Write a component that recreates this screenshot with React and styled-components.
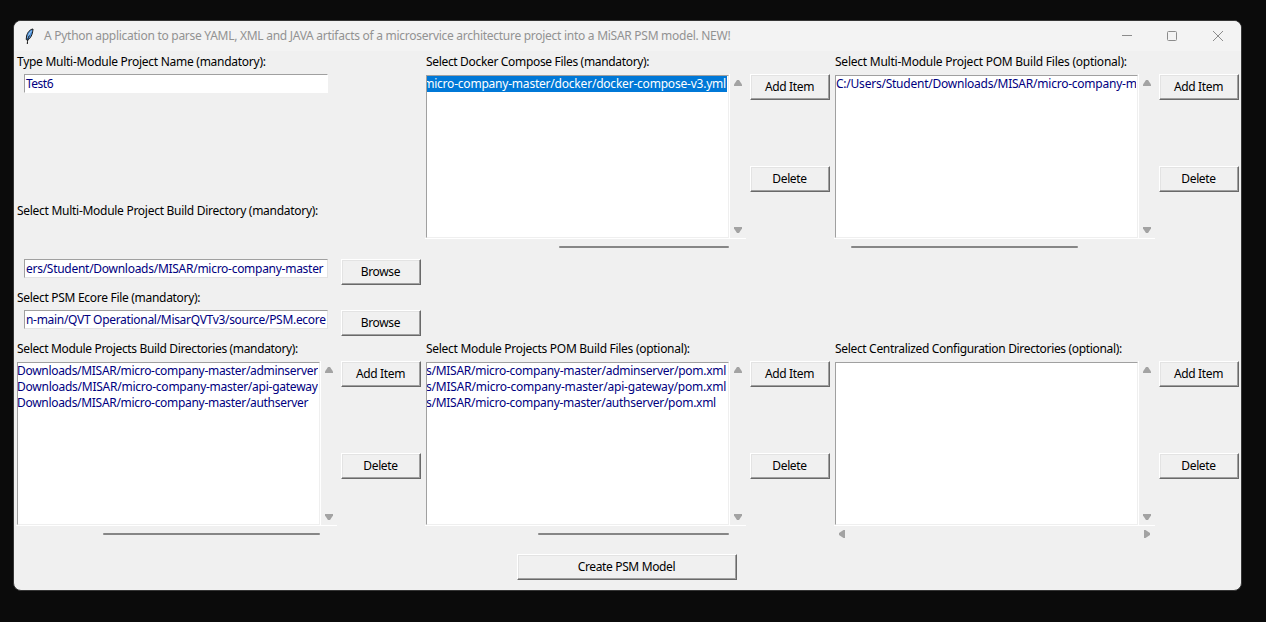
import React from "react";
import styled, { createGlobalStyle } from "styled-components";

const GlobalStyle = createGlobalStyle`
  * { box-sizing: border-box; }
  body {
    margin: 0;
    background: #0b0b0b;
    font-family: "Noto Sans", "Open Sans", sans-serif;
    font-size: 12px;
    color: #000;
    overflow: hidden;
  }
`;

const Desktop = styled.div`
  height: 622px;
  padding: 20px 24px 31px 13px;
`;

const Window = styled.main`
  width: 1229px;
  height: 571px;
  border: 1px solid #363636;
  border-radius: 8px;
  background: #f0f0f0;
  overflow: hidden;
`;

const TitleBar = styled.header`
  display: flex;
  align-items: center;
  height: 30px;
  padding-left: 9px;
  background: #f3f3f3;
  color: #929292;
`;

const Title = styled.h1`
  flex: 1;
  margin: 0 0 0 9px;
  font-size: 12px;
  font-weight: 400;
  line-height: 16px;
  white-space: nowrap;
  letter-spacing: ${(p) => p.$spacing}px;
`;

const Controls = styled.div`
  display: flex;
`;

const ControlButton = styled.button`
  display: flex;
  align-items: center;
  justify-content: center;
  width: 46px;
  height: 28px;
  padding: 0;
  border: 0;
  background: none;
  color: #8c8c8c;
`;

const Row = styled.div`
  display: grid;
  grid-template-columns: repeat(3, 409px);
  height: ${(p) => p.$height}px;
  padding-left: 2px;
`;

const Panel = styled.section`
  display: flex;
  flex-direction: column;
  min-width: 0;
`;

const Label = styled.label`
  height: 23px;
  margin-top: ${(p) => p.$top || 0}px;
  padding-left: 1px;
  line-height: 22px;
  white-space: nowrap;
  letter-spacing: ${(p) => p.$spacing || 0}px;
`;

const FieldRow = styled.div`
  display: flex;
  height: 26px;
  gap: 13px;
  margin-top: ${(p) => p.$top || 0}px;
  padding-left: 8px;
`;

const Entry = styled.div`
  width: 304px;
  height: 19px;
  padding: 0 0 0 1px;
  border: 1px solid;
  border-color: #a0a0a0 ${(p) => p.$edge} ${(p) => p.$edge} #a0a0a0;
  background: #fff;
  color: #000080;
  line-height: 17px;
  white-space: nowrap;
  overflow: hidden;
  letter-spacing: ${(p) => p.$spacing || 0}px;
`;

const PushButton = styled.button`
  width: ${(p) => p.$width || 80}px;
  height: 26px;
  padding: 0 1px 1px 0;
  border: 1px solid;
  border-color: #fff #696969 #696969 #fff;
  background: #f0f0f0;
  box-shadow: inset -1px -1px #a0a0a0, inset 1px 1px #e3e3e3;
  color: #000;
  font: inherit;
  line-height: 16px;
  letter-spacing: -0.36px;
`;

const PanelBody = styled.div`
  display: flex;
  gap: 4px;
`;

const ListArea = styled.div`
  width: 321px;
`;

const ListTop = styled.div`
  display: flex;
  height: 165px;
  border-bottom: 1px solid #fff;
`;

const ListFrame = styled.div`
  width: 305px;
  padding: 1px 0 0 1px;
  border-right: 1px solid #fff;
`;

const ListBox = styled.ul`
  height: 163px;
  margin: 0;
  padding: 0 1px 0 0;
  border: 1px solid;
  border-color: #a0a0a0 #efefef #efefef #a0a0a0;
  background: #fff;
  list-style: none;
  overflow: hidden;
`;

const Item = styled.li`
  display: flex;
  justify-content: ${(p) => (p.$end ? "flex-end" : "flex-start")};
  height: 16px;
  padding-right: ${(p) => (p.$end ? 1 : 0)}px;
  background: ${(p) => (p.$selected ? "#0078d7" : "transparent")};
  color: ${(p) => (p.$selected ? "#fff" : "#000080")};
  line-height: 16px;
  white-space: nowrap;
  overflow: hidden;
  text-indent: ${(p) => p.$indent || 0}px;
  letter-spacing: ${(p) => p.$spacing || 0}px;
`;

const VScroll = styled.div`
  display: flex;
  flex-direction: column;
  justify-content: space-between;
  align-items: center;
  width: 16px;
  padding: 6px 0 5px;
`;

const HScroll = styled.div`
  display: flex;
  align-items: center;
  justify-content: space-between;
  height: 16px;
  padding: 0 5px;
`;

const Thumb = styled.div`
  width: ${(p) => p.$width}px;
  height: 2px;
  margin-left: ${(p) => p.$start - 5}px;
  border-radius: 1px;
  background: #868686;
`;

const Buttons = styled.div`
  display: flex;
  flex-direction: column;
  gap: 66px;
`;

const Footer = styled.footer`
  display: flex;
  padding: 11px 0 0 503px;
`;

const ARROWS = {
  up: { w: 8, h: 6, d: "M3 0H5L8 4.5V6H0V4.5Z" },
  down: { w: 8, h: 6, d: "M0 0H8V1.5L5 6H3L0 1.5Z" },
  left: { w: 6, h: 8, d: "M6 0V8H4.5L0 5V3L4.5 0Z" },
  right: { w: 6, h: 8, d: "M0 0V8H1.5L6 5V3L1.5 0Z" },
};

function Arrow({ dir }) {
  const { w, h, d } = ARROWS[dir];
  return (
    <svg width={w} height={h} viewBox={`0 0 ${w} ${h}`}>
      <path d={d} fill="#a3a3a3" />
    </svg>
  );
}

function Feather() {
  return (
    <svg width="12" height="17" viewBox="0 0 12 17">
      <path d="M10 1C7 1.300 4.300 4.500 3.600 8L3.200 11.500L4.400 12.300C7.300 10.800 9.600 7 10 1Z" fill="#4a90dc" stroke="#1c1c1c" strokeWidth="1" />
      <path d="M8.600 2.800C6.800 4.500 5.500 7.200 4.800 10" fill="none" stroke="#b5daf8" strokeWidth="0.900" />
      <path d="M6.300 7.500C5 10 4.500 12 4.300 16" fill="none" stroke="#111" strokeWidth="1" />
    </svg>
  );
}

function ListPanel({ label, spacing, items = [], end, indent, selected, thumb }) {
  return (
    <Panel>
      <Label $spacing={spacing}>{label}</Label>
      <PanelBody>
        <ListArea>
          <ListTop>
            <ListFrame>
              <ListBox>
                {items.map((item, i) => (
                  <Item key={item.path} $end={end} $indent={indent} $spacing={item.spacing} $selected={i === selected}>
                    {item.path}
                  </Item>
                ))}
              </ListBox>
            </ListFrame>
            <VScroll>
              <Arrow dir="up" />
              <Arrow dir="down" />
            </VScroll>
          </ListTop>
          <HScroll>
            {thumb ? (
              <Thumb $start={thumb[0]} $width={thumb[1]} />
            ) : (
              <>
                <Arrow dir="left" />
                <Arrow dir="right" />
              </>
            )}
          </HScroll>
        </ListArea>
        <Buttons>
          <PushButton>Add Item</PushButton>
          <PushButton>Delete</PushButton>
        </Buttons>
      </PanelBody>
    </Panel>
  );
}

export default function App() {
  return (
    <Desktop>
      <GlobalStyle />
      <Window>
        <TitleBar>
          <Feather />
          <Title $spacing={-0.273}>
            A Python application to parse YAML, XML and JAVA artifacts of a microservice architecture project into a MiSAR PSM model. NEW!
          </Title>
          <Controls>
            <ControlButton aria-label="Minimize">
              <svg width="12" height="10" viewBox="0 0 12 10"><path d="M2 4.500H12" stroke="currentColor" /></svg>
            </ControlButton>
            <ControlButton aria-label="Maximize">
              <svg width="10" height="10" viewBox="0 0 10 10"><rect x="0.500" y="0.500" width="9" height="9" rx="1" fill="none" stroke="currentColor" /></svg>
            </ControlButton>
            <ControlButton aria-label="Close">
              <svg width="10" height="10" viewBox="0 0 10 10"><path d="M0 0L10 10M10 0L0 10" stroke="currentColor" /></svg>
            </ControlButton>
          </Controls>
        </TitleBar>
        <Row $height={287}>
          <Panel>
            <Label $spacing={-0.27}>Type Multi-Module Project Name (mandatory):</Label>
            <FieldRow>
              <Entry $edge="#fff" $spacing={-0.5}>Test6</Entry>
            </FieldRow>
            <Label $top={100} $spacing={-0.28}>Select Multi-Module Project Build Directory (mandatory):</Label>
            <FieldRow $top={36}>
              <Entry $edge="#e3e3e3" $spacing={-0.275}>ers/Student/Downloads/MISAR/micro-company-master</Entry>
              <PushButton>Browse</PushButton>
            </FieldRow>
            <Label $top={2} $spacing={-0.3}>Select PSM Ecore File (mandatory):</Label>
            <FieldRow>
              <Entry $edge="#e3e3e3" $spacing={-0.305}>n-main/QVT Operational/MisarQVTv3/source/PSM.ecore</Entry>
              <PushButton>Browse</PushButton>
            </FieldRow>
          </Panel>
          <ListPanel
            label="Select Docker Compose Files (mandatory):"
            spacing={-0.33}
            items={[{ path: "micro-company-master/docker/docker-compose-v3.yml", spacing: -0.21 }]}
            end
            selected={0}
            thumb={[134, 170]}
          />
          <ListPanel
            label="Select Multi-Module Project POM Build Files (optional):"
            spacing={-0.24}
            items={[{ path: "C:/Users/Student/Downloads/MISAR/micro-company-m", spacing: -0.23 }]}
            thumb={[17, 227]}
          />
        </Row>
        <Row $height={205}>
          <ListPanel
            label="Select Module Projects Build Directories (mandatory):"
            spacing={-0.345}
            items={[
              { path: "Downloads/MISAR/micro-company-master/adminserver", spacing: -0.305 },
              { path: "Downloads/MISAR/micro-company-master/api-gateway", spacing: -0.25 },
              { path: "Downloads/MISAR/micro-company-master/authserver", spacing: -0.305 },
            ]}
            indent={-1}
            thumb={[87, 217]}
          />
          <ListPanel
            label="Select Module Projects POM Build Files (optional):"
            spacing={-0.285}
            items={[
              { path: "s/MISAR/micro-company-master/adminserver/pom.xml", spacing: -0.26 },
              { path: "s/MISAR/micro-company-master/api-gateway/pom.xml", spacing: -0.2 },
              { path: "s/MISAR/micro-company-master/authserver/pom.xml", spacing: -0.27 },
            ]}
            indent={-1}
            thumb={[113, 191]}
          />
          <ListPanel label="Select Centralized Configuration Directories (optional):" spacing={-0.33} />
        </Row>
        <Footer>
          <PushButton $width={220}>Create PSM Model</PushButton>
        </Footer>
      </Window>
    </Desktop>
  );
}
